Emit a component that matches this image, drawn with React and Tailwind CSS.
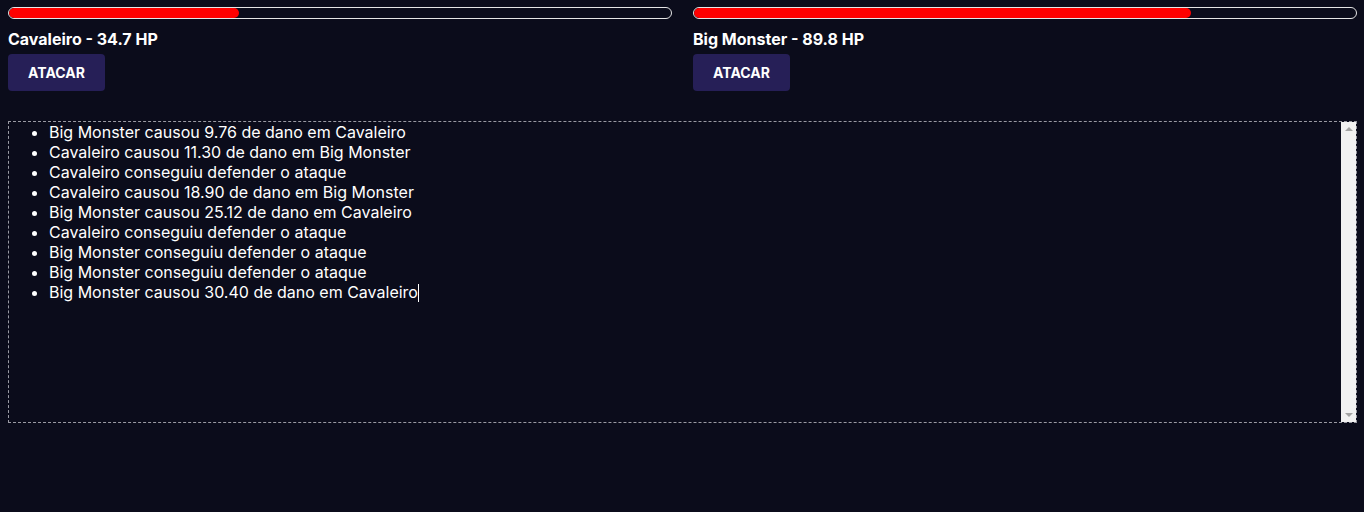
import React from 'react'

const fighters = [
    { name: 'Cavaleiro', hp: '34.7', fill: 34.7 },
    { name: 'Big Monster', hp: '89.8', fill: 75 },
]

const log = [
    'Big Monster causou 9.76 de dano em Cavaleiro',
    'Cavaleiro causou 11.30 de dano em Big Monster',
    'Cavaleiro conseguiu defender o ataque',
    'Cavaleiro causou 18.90 de dano em Big Monster',
    'Big Monster causou 25.12 de dano em Cavaleiro',
    'Cavaleiro conseguiu defender o ataque',
    'Big Monster conseguiu defender o ataque',
    'Big Monster conseguiu defender o ataque',
    'Big Monster causou 30.40 de dano em Cavaleiro',
]

const App = () => {
    return (
        <div className="min-h-[512px] bg-[#0b0c1b] pl-2 pr-[7px] pt-[7px] text-white font-['Inter',sans-serif]">
            <div className="grid grid-cols-2 gap-[21px]">
                {fighters.map((f) => (
                    <div key={f.name} className="flex flex-col">
                        <div className="h-3 rounded-[6px] border border-[#e5e5e5] overflow-hidden">
                            <div className="h-full rounded-[6px] bg-[#ff0000]" style={{ width: `${f.fill}%` }}></div>
                        </div>
                        <p className="mt-2 text-base font-bold leading-6">{f.name} - {f.hp} HP</p>
                        <button className="mt-[3px] h-[37px] w-[97px] rounded-[4px] bg-[#261f57] text-sm font-bold text-white">
                            ATACAR
                        </button>
                    </div>
                ))}
            </div>

            {/* log de batalha */}
            <div className="mt-[30px] flex h-[302px] border border-dashed border-[#9a9aa3]">
                <ul className="flex-1 list-disc pl-10 text-base leading-5">
                    {log.map((line, i) => (
                        <li key={i}>
                            {line}
                            {i === log.length - 1 && <span className="inline-block h-[18px] w-px bg-white align-middle -mt-[2px]"></span>}
                        </li>
                    ))}
                </ul>
                <div className="flex w-[15px] flex-col items-center justify-between bg-[#f1f1f1] py-[5px]">
                    <div className="h-0 w-0 border-x-[4px] border-b-[4px] border-x-transparent border-b-[#a3a3a3]"></div>
                    <div className="h-0 w-0 border-x-[4px] border-t-[4px] border-x-transparent border-t-[#a3a3a3]"></div>
                </div>
            </div>
        </div>
    )
}

export default App
